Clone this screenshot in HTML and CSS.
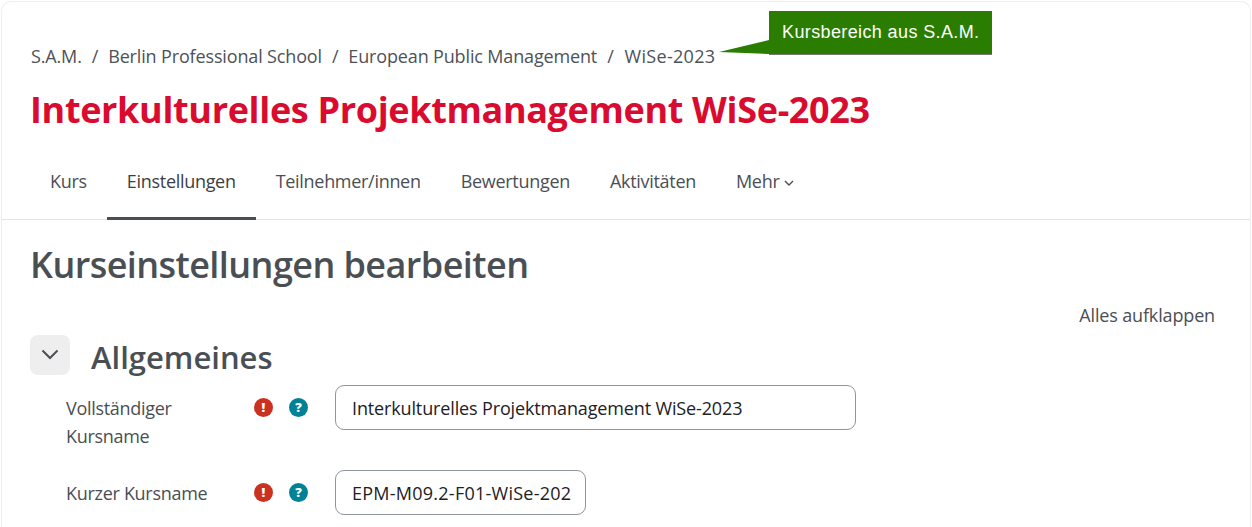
FILE: index.html
```html
<!DOCTYPE html>
<html lang="de">
<head>
    <meta charset="UTF-8">
    <title>Kurseinstellungen bearbeiten</title>
    <link rel="stylesheet" href="styles.css">
</head>
<body>
    <div class="page-card">
        <header class="course-header">
            <nav class="breadcrumb">
                <a>S.A.M.</a><span class="sep">/</span>
                <a>Berlin Professional School</a><span class="sep">/</span>
                <a>European Public Management</a><span class="sep">/</span>
                <a class="current">WiSe-2023</a>
            </nav>
            <div class="callout">
                <svg class="callout-tail" width="50" height="14" viewBox="0 0 50 14"><polygon points="0,12 50,0 50,14" fill="#2a7d00"/></svg>
                <span>Kursbereich aus S.A.M.</span>
            </div>
            <h1>Interkulturelles Projektmanagement WiSe-2023</h1>
        </header>
        <nav class="tabs">
            <a>Kurs</a>
            <a class="active">Einstellungen</a>
            <a>Teilnehmer/innen</a>
            <a>Bewertungen</a>
            <a>Aktivitäten</a>
            <a>Mehr
                <svg class="caret" width="10" height="6" viewBox="0 0 10 6"><path d="M1 1l4 4 4-4" fill="none" stroke="#4a4f54" stroke-width="1.4"/></svg>
            </a>
        </nav>
        <main class="content">
            <h2>Kurseinstellungen bearbeiten</h2>
            <div class="expand-row"><a>Alles aufklappen</a></div>
            <div class="section-head">
                <button class="collapse-btn">
                    <svg width="18" height="11" viewBox="0 0 18 11"><path d="M1.5 1.5l7.5 7.5 7.5-7.5" fill="none" stroke="#4a4f54" stroke-width="2"/></svg>
                </button>
                <h3>Allgemeines</h3>
            </div>
            <div class="form-row">
                <label>Vollständiger Kursname</label>
                <div class="form-icons">
                    <span class="badge badge-req">!</span>
                    <span class="badge badge-help">?</span>
                </div>
                <input class="input-long" type="text" value="Interkulturelles Projektmanagement WiSe-2023">
            </div>
            <div class="form-row">
                <label>Kurzer Kursname</label>
                <div class="form-icons">
                    <span class="badge badge-req">!</span>
                    <span class="badge badge-help">?</span>
                </div>
                <input class="input-short" type="text" value="EPM-M09.2-F01-WiSe-202">
            </div>
        </main>
    </div>
</body>
</html>
```

FILE: styles.css
```css
body {
    margin: 0;
    background-color: #fff;
    font-family: "Open Sans", "Noto Sans", sans-serif;
    font-size: 18px;
    letter-spacing: -0.15px;
    color: #4a4f54;
}

.page-card {
    margin: 1px 1px 0 1px;
    border: 1px solid #eeeeee;
    border-bottom: none;
    border-radius: 10px 10px 0 0;
    height: 525px;
    overflow: hidden;
}

.course-header {
    position: relative;
    padding: 41px 29px 24px;
}

.breadcrumb {
    display: flex;
    line-height: 26px;
    color: #4d5257;
}

.sep {
    margin: 0 10px;
}

.current {
    margin-left: 1px;
    letter-spacing: 0.3px;
}

.callout {
    position: absolute;
    left: 767px;
    top: 9px;
    background-color: #2a7d00;
    color: #fff;
    font-family: "Liberation Sans", Arial, sans-serif;
    letter-spacing: 0.38px;
    line-height: 43px;
    padding: 0 13px;
    border-bottom: 1px solid #777;
}

.callout-tail {
    position: absolute;
    right: 100%;
    bottom: 0;
    display: block;
}

h1 {
    margin: 17px 0 0 -1px;
    font-size: 36px;
    line-height: 48px;
    font-weight: 700;
    letter-spacing: -0.34px;
    color: #d90c2f;
    white-space: nowrap;
}

.tabs {
    display: flex;
    border-bottom: 1px solid #e3e3e3;
    padding-left: 28px;
    letter-spacing: -0.3px;
}

.tabs a {
    padding: 10px 20px 23px;
    line-height: 26px;
    border-bottom: 3px solid transparent;
    margin-bottom: -1px;
}

.tabs a.active {
    color: #3b3f43;
    border-bottom-color: #4a4f54;
}

.caret {
    vertical-align: 2px;
}

.content {
    padding: 0 29px 0 28px;
}

h2 {
    margin: 21px 0 0;
    font-size: 36px;
    line-height: 48px;
    font-weight: 600;
    letter-spacing: -0.57px;
}

.expand-row {
    display: flex;
    justify-content: flex-end;
    margin-top: 13px;
    padding-right: 6px;
    line-height: 26px;
}

.section-head {
    display: flex;
    align-items: center;
    gap: 21px;
    margin: 7px 0 10px;
}

.collapse-btn {
    width: 40px;
    height: 40px;
    border: none;
    border-radius: 8px;
    background-color: #eeeeee;
    padding: 0;
}

h3 {
    margin: 0;
    padding-top: 4px;
    font-size: 31px;
    line-height: 36px;
    font-weight: 600;
    letter-spacing: 0;
}

.form-row {
    display: flex;
    align-items: flex-start;
    padding-left: 36px;
    margin-bottom: 20px;
}

.form-row label {
    width: 170px;
    margin-right: 18px;
    padding-top: 9px;
    line-height: 28px;
    letter-spacing: -0.3px;
}

.form-icons {
    display: flex;
    gap: 16px;
    padding-top: 13px;
    width: 81px;
}

.badge {
    width: 19px;
    height: 19px;
    border-radius: 50%;
    color: #fff;
    font-size: 13px;
    font-weight: 800;
    line-height: 19px;
    text-align: center;
    letter-spacing: 0;
}

.badge-req {
    background-color: #ca3120;
}

.badge-help {
    background-color: #008196;
}

input {
    height: 45px;
    box-sizing: border-box;
    border: 1px solid #8f959e;
    border-radius: 9px;
    padding: 0 16px;
    font-family: inherit;
    font-size: 18px;
    letter-spacing: -0.14px;
    color: #1d2125;
}

.input-long {
    width: 521px;
}

.input-short {
    width: 251px;
    padding-right: 10px;
    letter-spacing: 0.25px;
}
```
